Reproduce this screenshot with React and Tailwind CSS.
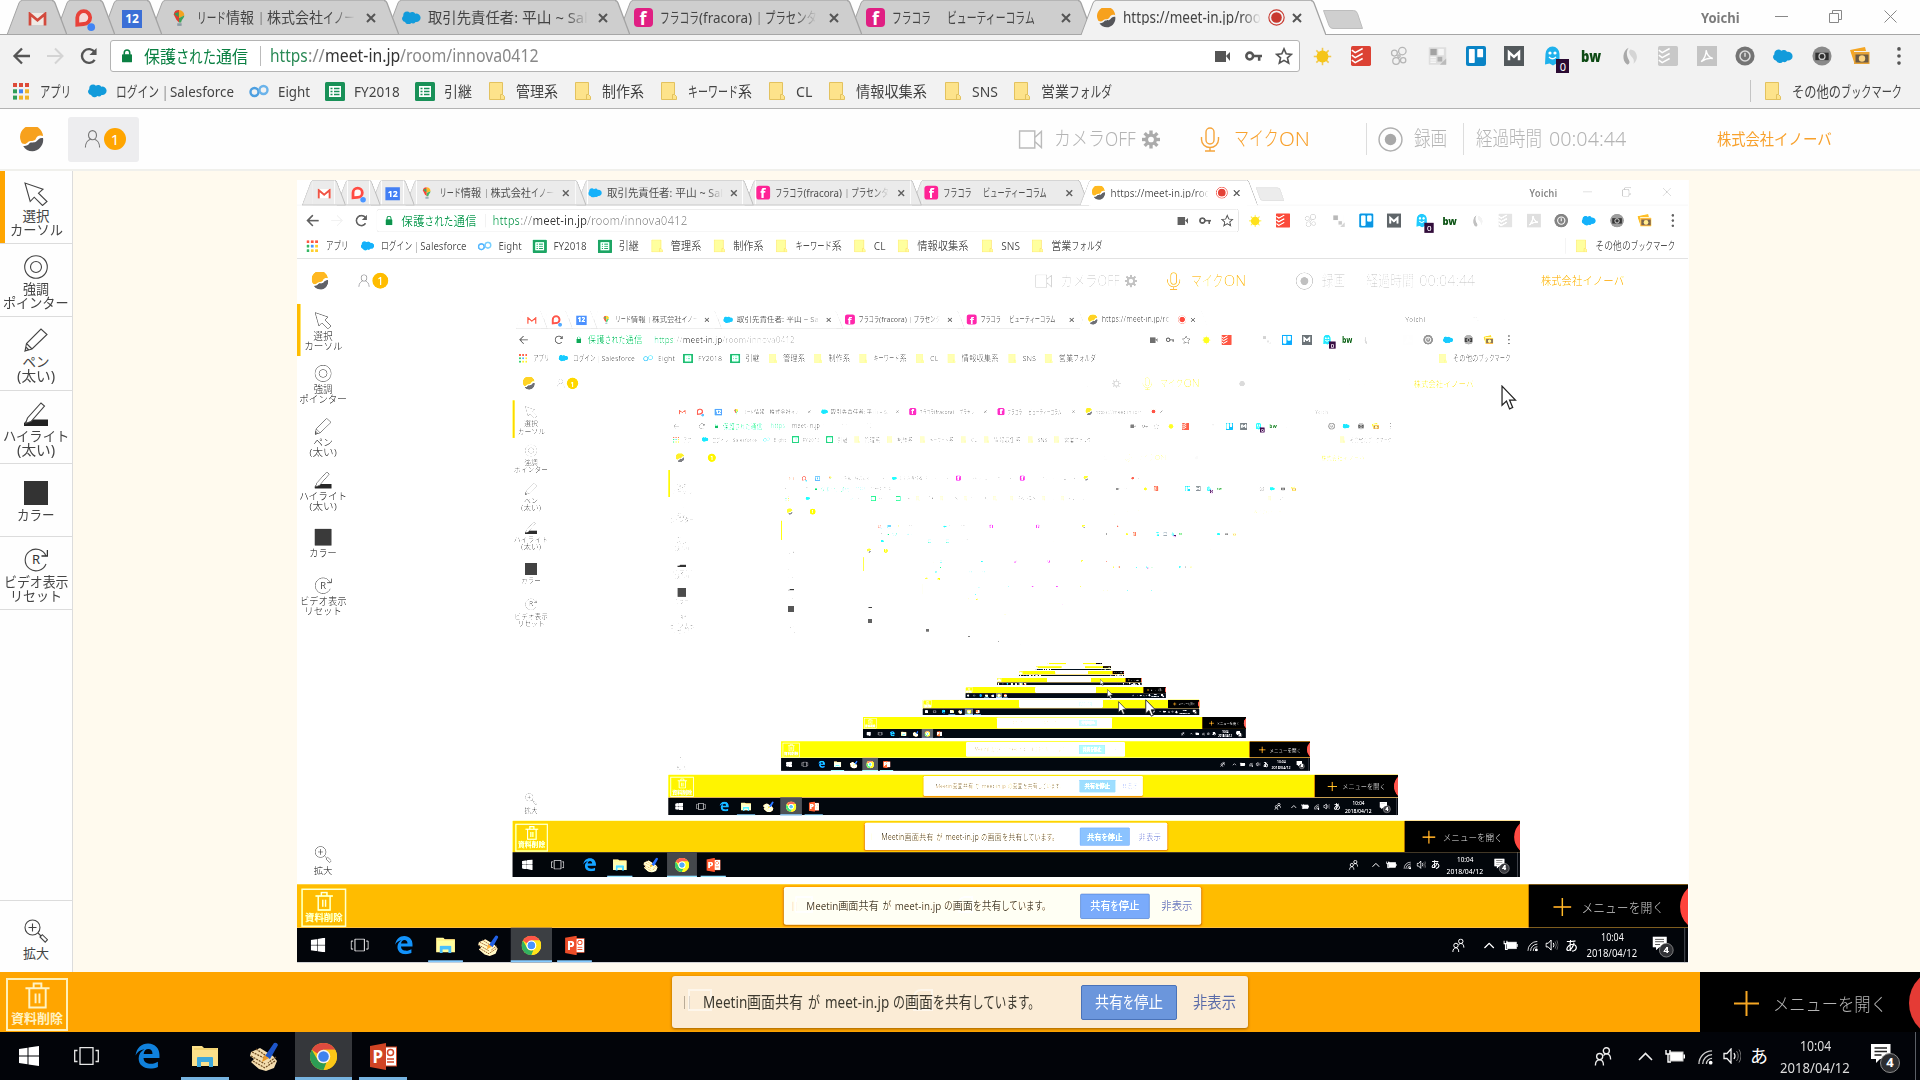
import React, { useLayoutEffect, useRef, useState } from "react";

/* Text squeezed or stretched horizontally to an exact width. */
function Fit({ w, children, className = "" }) {
  const ref = useRef(null);
  const [k, setK] = useState(1);
  useLayoutEffect(() => {
    const n = ref.current ? ref.current.offsetWidth : 0;
    if (n > 0) setK(w / n);
  }, [w]);
  return (
    <span className={"inline-block shrink-0 whitespace-nowrap text-left " + className} style={{ width: w }}>
      <span ref={ref} className="inline-block origin-left whitespace-pre" style={{ transform: `scaleX(${k})` }}>
        {children}
      </span>
    </span>
  );
}

/* A row of fitted runs: [text, width, gap before] */
function Runs({ parts, className = "" }) {
  return (
    <span className={"flex shrink-0 items-center " + className}>
      {parts.map(([t, w, g = 0], i) => (
        <span key={i} className="flex" style={{ marginLeft: g }}>
          <Fit w={w}>{t}</Fit>
        </span>
      ))}
    </span>
  );
}

const Svg = ({ w = 20, h = w, vb = "0 0 24 24", children, className = "" }) => (
  <svg width={w} height={h} viewBox={vb} fill="none" className={"block shrink-0 " + className}>
    {children}
  </svg>
);

/* ---------- favicons and bookmark icons ---------- */
const Gmail = () => (
  <Svg w={19} h={14} vb="0 0 19 14">
    <rect x="1" y="1" width="17" height="12" fill="#efe9e4" />
    <path d="M2 13.500V2l7.500 6.200L17 2v11.500" stroke="#d24a3d" strokeWidth="2.700" />
  </Svg>
);
const Dots = () => (
  <Svg w={23} h={24}>
    <path d="M2.500 19V9.500a8.700 8.700 0 1 1 8.700 8.700z" fill="#e8423a" />
    <path d="M6.500 14.500V9.500a4.700 4.700 0 1 1 4.700 4.700z" fill="#f4dcda" />
    <circle cx="19" cy="19.500" r="4" fill="#4184f3" />
  </Svg>
);
const Cal = () => (
  <div className="flex h-[18px] w-5 shrink-0 items-center justify-center bg-[#3b6fd6] text-[12px] leading-none font-bold text-white">12</div>
);
const Bulb = () => (
  <Svg w={14} h={20} vb="0 0 16 20">
    <path d="M2 6a6 5.500 0 0 1 6-5v14L5 12z" fill="#e03b2f" />
    <path d="M8 1a6 5.500 0 0 1 6 6l-6 3z" fill="#f3a21f" />
    <path d="M14 7c0 3-3 4-3.500 8H8v-5z" fill="#3da35a" />
    <path d="M2.500 5l5 4V3z" fill="#2f9e58" />
    <rect x="6" y="16" width="5" height="3" fill="#8a9aa3" />
  </Svg>
);
const Cloud = ({ w = 20 }) => (
  <Svg w={w} h={w * 0.72} vb="0 0 20 14">
    <path d="M8.300 1.600A4 4 0 0 1 14 2.600 4.600 4.600 0 0 1 19.600 7a4.400 4.400 0 0 1-5.300 4.300 3.600 3.600 0 0 1-4.500 1.200 4 4 0 0 1-6.600-1A3.700 3.700 0 0 1 1.400 5 4 4 0 0 1 8.300 1.600z" fill="#129bdb" />
  </Svg>
);
const Fr = () => (
  <div className="flex h-[19px] w-[19px] shrink-0 items-center justify-center rounded-sm bg-[#e01f83] text-[18px] leading-none font-bold text-white">f</div>
);
const Logo = ({ w = 18, h = w }) => (
  <Svg w={w} h={h}>
    <path d="M1 14A11.500 11.500 0 1 1 23 8.500c-3.500-1.500-6 0-7 2.500s-3 2.300-5.500 2.500C7.500 13.800 7.500 16 5 16.500 2.800 16.500 1.300 15.700 1 14z" fill="#f7a11d" />
    <path d="M3.200 18.500c3 .3 5-.7 6.300-2.700 1.500-1.800 5 .2 7.300-2.300 1.700-2 3-3.500 6.200-3C24.300 17 19 23.700 12.500 23.700 8.500 23.700 5 22 3.200 18.500z" fill="#55565a" />
  </Svg>
);
const Apps = () => (
  <Svg w={16} h={17} vb="0 0 16 17">
    {["#dd4b39", "#dd4b39", "#dd4b39", "#2f9e58", "#4184f3", "#f0b429", "#2f9e58", "#f0b429", "#f0b429"].map((c, i) => (
      <rect key={i} x={(i % 3) * 6} y={Math.floor(i / 3) * 6.300} width="4" height="4" fill={c} />
    ))}
  </Svg>
);
const Eight = () => (
  <Svg w={20} h={14} vb="0 0 20 14">
    <circle cx="5.500" cy="8" r="4" stroke="#4d9fe0" strokeWidth="2.400" />
    <circle cx="14.500" cy="6" r="4" stroke="#6bb3ea" strokeWidth="2.400" />
  </Svg>
);
const Sheet = () => (
  <Svg w={20} h={19} vb="0 0 20 19">
    <rect width="20" height="19" rx="1.500" fill="#199158" />
    <rect x="4" y="4" width="12" height="11" fill="#fff" />
    <path d="M5.500 6.500h2M9 6.500h5.500M5.500 9.500h2M9 9.500h5.500M5.500 12.500h2M9 12.500h5.500" stroke="#199158" strokeWidth="1.400" />
  </Svg>
);
const Folder = () => (
  <Svg w={16} h={18} vb="0 0 16 18">
    <path d="M.5.500h13v12l2 2v3H.5z" fill="#fde38b" stroke="#e3c25f" />
    <path d="M11.500 17v-4.500h2" stroke="#e3c25f" />
  </Svg>
);
const Close = () => (
  <Svg w={10} h={10} vb="0 0 10 10">
    <path d="M1 1l8 8M9 1L1 9" stroke="#555" strokeWidth="2" />
  </Svg>
);

/* ---------- tab strip ---------- */
function Tab({ wc, z, active, children }) {
  const fill = active ? "#f2f2f2" : "#cecece";
  return (
    <div className={"relative flex h-[35px] shrink-0 items-center " + wc + " " + z}>
      <div className="absolute inset-0 flex">
        <svg className="h-full w-[15px]" viewBox="0 0 15 35" preserveAspectRatio="none">
          <path d="M0 35L12 3Q13 .5 15 .5V35z" fill={fill} />
          <path d="M0 35L12 3Q13 .5 15 .5" fill="none" stroke="#a3a3a3" />
        </svg>
        <div className={"h-full flex-1 border-t border-[#b5b5b5] " + (active ? "bg-[#f2f2f2]" : "bg-[#cecece]")} />
        <svg className="h-full w-[15px]" viewBox="0 0 15 35" preserveAspectRatio="none">
          <path d="M15 35L3 3Q2 .5 0 .5V35z" fill={fill} />
          <path d="M15 35L3 3Q2 .5 0 .5" fill="none" stroke="#a3a3a3" strokeWidth="1.300" />
        </svg>
      </div>
      {!active && <div className="absolute inset-x-0 bottom-0 h-px bg-[#a6a6a6]" />}
      <div className="relative flex w-full items-center">{children}</div>
    </div>
  );
}

const FADE = "[mask-image:linear-gradient(to_right,black_86%,transparent_100%)]";

function TabStrip() {
  return (
    <div className="relative flex h-[35px] items-center bg-[#fefefe] pl-[7px] text-[15px] leading-none text-[#444]">
      <div className="absolute inset-x-0 bottom-0 h-px bg-[#a6a6a6]" />
      <Tab wc="w-[60px]" z="z-[9]"><div className="flex w-full justify-center pt-[2px]"><Gmail /></div></Tab>
      <Tab wc="w-[60px] -ml-[12.500px]" z="z-[8]"><div className="flex w-full justify-center pt-[4px]"><Dots /></div></Tab>
      <Tab wc="w-[60px] -ml-[12.500px]" z="z-[7]"><div className="flex w-full justify-center pt-[3px]"><Cal /></div></Tab>
      <Tab wc="w-[249px] -ml-[12.500px]" z="z-[6]">
        <div className="ml-[22px] w-[18px]"><Bulb /></div>
        <Runs className={"ml-[7px] " + FADE} parts={[["リード", 29], ["情報", 28], ["|", 4, 5], ["株式会社", 56, 4], ["イノー", 32]]} />
        <div className="ml-[11px]"><Close /></div>
      </Tab>
      <Tab wc="w-[244px] -ml-[12.500px]" z="z-[5]">
        <div className="ml-[16px]"><Cloud w={19} /></div>
        <Runs className={"ml-[7px] " + FADE} parts={[["取引先責任者:", 90], ["平山 ~ Sal", 66, 4]]} />
        <div className="ml-[10px]"><Close /></div>
      </Tab>
      <Tab wc="w-[244px] -ml-[12.500px]" z="z-[4]">
        <div className="ml-[16px]"><Fr /></div>
        <Runs className={"ml-[7px] " + FADE} parts={[["フラコラ", 39], ["(fracora)", 53], ["|", 4, 5], ["プラセンタ", 52, 4]]} />
        <div className="ml-[12px]"><Close /></div>
      </Tab>
      <Tab wc="w-[244px] -ml-[12.500px]" z="z-[3]">
        <div className="ml-[17px]"><Fr /></div>
        <Runs className="ml-[7px]" parts={[["フラコラ", 39], ["ビューティーコラム", 88, 16]]} />
        <div className="ml-[26px]"><Close /></div>
      </Tab>
      <Tab wc="w-[245px] -ml-[12.500px]" z="z-10" active>
        <div className="ml-[16px]"><Logo w={19} h={20} /></div>
        <Runs className={"ml-[7px] text-[15.500px] " + FADE} parts={[["https://meet-in.jp/roo", 138]]} />
        <Svg w={17} h={17} className="ml-[7px]">
          <circle cx="12" cy="12" r="10.800" stroke="#c8392f" strokeWidth="1.600" />
          <circle cx="12" cy="12" r="7.500" fill="#c8392f" />
        </Svg>
        <div className="ml-[7px]"><Close /></div>
      </Tab>
      <Svg w={42} h={21} vb="0 0 42 21" className="-ml-[4px] mb-[-3px]">
        <path d="M1.500 1.500h30q3 0 4 3l5 15H11q-3 0-4-3z" fill="#cfcfcf" stroke="#bdbdbd" />
      </Svg>
      <div className="ml-auto flex items-center pb-[3px]">
        <Fit w={39} className="pt-1 text-[14px] font-bold text-[#7c7c7c]">Yoichi</Fit>
        <div className="ml-[35px] h-px w-[13px] bg-[#888]" />
        <Svg w={13} h={13} vb="0 0 13 13" className="ml-[41px]">
          <path d="M.5 3.500h9v9h-9zM3.500 3V.5h9v9H10" stroke="#888" />
        </Svg>
        <Svg w={13} h={13} vb="0 0 13 13" className="mr-[23px] ml-[42px]">
          <path d="M.5.500l12 12M12.500.5l-12 12" stroke="#888" />
        </Svg>
      </div>
    </div>
  );
}

/* ---------- toolbar ---------- */
const Sun = () => (
  <Svg w={19}>
    {[0, 45, 90, 135].map((a) => (
      <path key={a} d="M12 1v22" stroke="#f2c94c" strokeWidth="2" transform={`rotate(${a} 12 12)`} />
    ))}
    <circle cx="12" cy="12" r="7.500" fill="#f5c518" />
  </Svg>
);
const Todo = ({ c }) => (
  <Svg w={20}>
    <rect width="24" height="24" rx="2" fill={c} />
    <path d="M1 5l4 3 9-5M1 11l4 3 9-5M1 17l4 3 9-5" stroke="#fff" strokeWidth="1.800" />
  </Svg>
);
const Petals = () => (
  <Svg w={20} h={22}>
    <g stroke="#b5b5b5" strokeWidth="1.500">
      <circle cx="16" cy="6" r="4.500" /><circle cx="6.500" cy="8.500" r="3.500" /><circle cx="8.500" cy="18" r="4" /><circle cx="17" cy="17" r="3.200" /><circle cx="12" cy="12" r="1.500" />
    </g>
  </Svg>
);
const Blocks = () => (
  <Svg w={19} h={20}>
    <rect x="1" y="1" width="22" height="22" fill="#dedede" />
    <rect x="3" y="3" width="8" height="8" fill="#a2a2a2" /><rect x="13" y="3" width="7" height="8" fill="#f6f6f6" />
    <path d="M3 14h7M3 17h7M3 20h7" stroke="#f6f6f6" strokeWidth="1.800" /><rect x="12" y="13" width="6" height="6" fill="#b0b0b0" />
    <path d="M23 15v8h-8z" fill="#bbb" />
  </Svg>
);
const Trello = () => (
  <Svg w={20}><rect width="24" height="24" rx="2.500" fill="#0a84c6" /><rect x="3.500" y="3.500" width="7" height="17" rx="1" fill="#fff" /><rect x="13.500" y="3.500" width="7" height="10" rx="1" fill="#fff" /></Svg>
);
const MBox = () => (
  <Svg w={20}><rect width="24" height="24" fill="#53595c" /><path d="M6 17V7.500l6 5.500 6-5.500V17" stroke="#fff" strokeWidth="3" /></Svg>
);
const Ghost = () => (
  <div className="relative">
    <Svg w={17} h={20} vb="0 0 17 20">
      <path d="M1.500 8a7 7.500 0 0 1 14 0v8l1 3-4-1.500-3.500 2-3.500-2L1 18.500z" fill="#1fb1ec" />
      <circle cx="6" cy="7" r="1.600" fill="#fff" /><circle cx="11" cy="7" r="1.600" fill="#fff" />
      <path d="M5 11q3.500 3.500 7 0" stroke="#fff" strokeWidth="1.300" />
    </Svg>
    <div className="absolute top-[13px] left-[12px] flex h-[14px] w-[13px] items-center justify-center bg-[#2b0b33] text-[11px] leading-none text-white">0</div>
  </div>
);
const Bw = () => <Fit w={20} className="text-[15px] leading-none font-black text-[#0d4a14]">bw</Fit>;
const Swirl = () => (
  <Svg w={19}><path d="M11 1C3 4 2 18 9 22c3 0 4-3 2-6S7 6 11 1z" fill="#a9a9a9" /><path d="M13 3c8 0 12 12 4 18 2-6-2-8-4-11s-2-5 0-7z" fill="#d5d5d5" /></Svg>
);
const Pdf = () => (
  <Svg w={20}><rect width="24" height="24" fill="#c4c4c4" /><path d="M5 19c3-3 6-8 6-14 1 6 4 9 8 10-5-1-10 1-14 4z" stroke="#fff" strokeWidth="1.600" /></Svg>
);
const Power = () => (
  <Svg w={20}><circle cx="12" cy="12" r="11.500" fill="#747474" /><circle cx="12" cy="12" r="6" stroke="#ddd" strokeWidth="1.800" /><path d="M12 8v5" stroke="#ddd" strokeWidth="1.800" /></Svg>
);
const Cam = () => (
  <Svg w={20}><circle cx="12" cy="12" r="11.500" fill="#8a8a8a" /><rect x="4" y="8" width="16" height="9" fill="#303030" /><circle cx="12" cy="12.500" r="3.600" fill="#303030" stroke="#c9c9c9" strokeWidth="1.500" /></Svg>
);
const Photos = () => (
  <Svg w={20} h={18} vb="0 0 20 18"><path d="M0 3L15 0l1 4H4v11z" fill="#f5a623" /><rect x="4" y="5" width="15.500" height="12" fill="#e8a336" /><rect x="5.500" y="7.500" width="13" height="8" fill="#6b5a45" /><circle cx="12" cy="11.500" r="3.200" fill="#fbd27f" /></Svg>
);
const Kebab = () => (
  <Svg w={20}><circle cx="12" cy="3.500" r="2.200" fill="#555" /><circle cx="12" cy="12" r="2.200" fill="#555" /><circle cx="12" cy="20.500" r="2.200" fill="#555" /></Svg>
);

function Toolbar() {
  const ext = [<Sun />, <Todo c="#dc4234" />, <Petals />, <Blocks />, <Trello />, <MBox />, <Ghost />, <Bw />, <Swirl />, <Todo c="#c8c8c8" />, <Pdf />, <Power />, <Cloud w={20} />, <Cam />, <Photos />, <Kebab />];
  return (
    <div className="flex h-[38px] items-start bg-[#f2f2f2] pt-[5px]">
      <div className="flex h-8 w-[110px] items-center pl-[12px]">
        <Svg w={19} h={18} vb="0 0 19 18"><path d="M18 9H3M10 1.500L2.500 9l7.500 7.500" stroke="#555" strokeWidth="2.300" /></Svg>
        <Svg w={19} h={18} vb="0 0 19 18" className="ml-[15px]"><path d="M1 9h15M9 1.500L16.500 9 9 16.500" stroke="#d4d4d4" strokeWidth="2" /></Svg>
        <Svg w={19} h={18} vb="0 0 20 19" className="ml-[14px]"><path d="M16.500 13.500a7.300 7.300 0 1 1 0-8" stroke="#555" strokeWidth="2.500" /><path d="M18.500 1v7.500H11z" fill="#555" /></Svg>
      </div>
      <div className="flex h-8 w-[1190px] items-center rounded-[3px] border border-[#b4b4b4] bg-white text-[17px] leading-none">
        <Svg w={10} h={14} vb="0 0 11 15" className="ml-[11px]"><rect y="5.500" width="11" height="9" rx="1" fill="#0b8043" /><path d="M2.500 6V4a3 3 0 0 1 6 0v2" stroke="#0b8043" strokeWidth="1.700" /></Svg>
        <Runs className="ml-[12px] text-[#0b8043]" parts={[["保護", 32], ["された", 40], ["通信", 32]]} />
        <div className="ml-[12px] h-5 w-px bg-[#bbb]" />
        <Runs className="ml-[9px] text-[17.500px]" parts={[[<span className="text-[#2a8a56]">https</span>, 38], [<span className="text-[#888]">://</span>, 17], [<span className="text-[#333]">meet-in.jp</span>, 75], [<span className="text-[#888]">/room/innova0412</span>, 139]]} />
        <Svg w={15} h={13} vb="0 0 15 13" className="ml-auto"><path d="M0 1h11v11H0zM11 6l4-4v9z" fill="#555" /></Svg>
        <Svg w={17} h={12} vb="0 0 18 12" className="ml-[15px]"><circle cx="5" cy="6" r="3.600" stroke="#555" strokeWidth="2.700" /><path d="M8.500 6H18M15 6v5" stroke="#555" strokeWidth="2.700" /></Svg>
        <Svg w={18} className="mr-[6px] ml-[13px]"><path d="M12 2.500l2.900 6.600 7 .7-5.300 4.700 1.600 7L12 17.800l-6.200 3.700 1.600-7L2.100 9.800l7-.7z" stroke="#555" strokeWidth="2.200" /></Svg>
      </div>
      <div className="flex h-8 items-center pl-[3px]">
        {ext.map((e, i) => (
          <div key={i} className="flex w-[38.450px] justify-center">{e}</div>
        ))}
      </div>
    </div>
  );
}

function Bookmarks() {
  const items = [
    [<Apps />, 76, [["アプリ", 31]]],
    [<Cloud w={19} />, 162, [["ログイン", 43], ["|", 4, 4], ["Salesforce", 64, 3]]],
    [<Eight />, 76, [["Eight", 32]]],
    [<Sheet />, 90, [["FY2018", 46]]],
    [<Sheet />, 72, [["引継", 28]]],
    [<Folder />, 86, [["管理系", 42]]],
    [<Folder />, 86, [["制作系", 42]]],
    [<Folder />, 108, [["キーワード", 50], ["系", 14]]],
    [<Folder />, 60, [["CL", 16]]],
    [<Folder />, 116, [["情報収集系", 71]]],
    [<Folder />, 69, [["SNS", 26]]],
    [<Folder />, 110, [["営業", 28], ["フォルダ", 43]]],
  ];
  return (
    <div className="flex h-[36px] items-center border-b border-[#b3b3b3] bg-[#f2f2f2] pt-px pl-[11px] text-[15px] leading-none text-[#444]">
      {items.map(([ic, w, parts], i) => (
        <div key={i} className="flex shrink-0 items-center" style={{ width: w }}>
          <div className="mr-[9px] flex w-5 shrink-0 justify-center">{ic}</div>
          <Runs parts={parts} />
        </div>
      ))}
      <div className="ml-auto flex items-center pr-[18px]">
        <div className="mr-[14px] h-[22px] w-px bg-[#c4c4c4]" />
        <Folder />
        <Runs className="ml-[11px]" parts={[["その他の", 49], ["ブックマーク", 61]]} />
      </div>
    </div>
  );
}

/* ---------- meeting page ---------- */
function Header() {
  return (
    <div className="flex h-[62px] items-center border-b-2 border-[#f0f0ec] bg-[#fefefe] text-[20px] leading-none font-light text-[#b4b4b4]">
      <div className="ml-[20px]"><Logo w={24} h={25} /></div>
      <div className="ml-[24px] flex h-[45px] w-[71px] items-center rounded-[3px] bg-[#ededef] pl-[16px]">
        <Svg w={17} h={18} vb="0 0 17 19"><ellipse cx="8.500" cy="5.500" rx="4.200" ry="4.800" stroke="#777" strokeWidth="1.200" /><path d="M1 18.500c0-5 3-8 5.500-8.700M16 18.500c0-5-3-8-5.500-8.700" stroke="#777" strokeWidth="1.200" /></Svg>
        <div className="ml-[3px] flex h-[22px] w-[22px] items-center justify-center rounded-full bg-[#ffa500] text-[15px] font-normal text-white">1</div>
      </div>
      <Svg w={25} h={19} vb="0 0 25 20" className="ml-[879px]"><path d="M1 1h16v18H1zM17 8l7-6.500v17L17 12" stroke="#bbb" strokeWidth="1.500" /></Svg>
      <Runs className="ml-[11px]" parts={[["カメラ", 51], ["OFF", 31]]} />
      <Svg w={18} h={19} className="ml-[6px]">
        {[0, 45, 90, 135].map((a) => (
          <path key={a} d="M12 0v24" stroke="#ababab" strokeWidth="4.500" transform={`rotate(${a} 12 12)`} />
        ))}
        <circle cx="12" cy="12" r="8" fill="#ababab" /><circle cx="12" cy="12" r="3.800" fill="#fefefe" />
      </Svg>
      <Svg w={20} h={25} vb="0 0 20 25" className="ml-[40px]"><rect x="6" y="1" width="8" height="16" rx="4" stroke="#f5a53c" strokeWidth="1.400" /><path d="M1.500 10v2.500a8.500 8 0 0 0 17 0V10M10 20.500V24M5 24h10" stroke="#f5a53c" strokeWidth="1.400" /></Svg>
      <Runs className="ml-[14px] text-[#f8a12c]" parts={[["マイク", 45], ["ON", 31]]} />
      <div className="ml-[56px] h-[32px] w-px bg-[#ddd]" />
      <Svg w={25} h={25} className="ml-[11px]"><circle cx="12" cy="12" r="11" stroke="#b0b0b0" strokeWidth="1.400" /><circle cx="12" cy="12" r="5.500" fill="#a8a8a8" /></Svg>
      <Runs className="ml-[11px]" parts={[["録画", 33]]} />
      <div className="ml-[16px] h-[32px] w-px bg-[#ddd]" />
      <Runs className="ml-[12px]" parts={[["経過時間", 66], ["00:04:44", 77, 7]]} />
      <Runs className="ml-[91px] pt-[2px] text-[15.500px] font-normal text-[#f8a12c]" parts={[["株式会社", 57], ["イノーバ", 58]]} />
    </div>
  );
}

const toolIcons = {
  arrow: <path d="M1 1l5.200 18.500 4-4.300 8.300 8.300 4.500-4-8.500-8.300 4.500-4z" stroke="#444" strokeWidth="1.100" />,
  target: <g stroke="#444" strokeWidth="1.100"><circle cx="12" cy="12" r="11.300" /><circle cx="12" cy="12" r="5.500" /></g>,
  pen: <path d="M1 23l1.500-7.500L17 1l6 5.500L8 21zM2.500 15.500L8 21M1 23l1-4 2.500 2.600z" stroke="#444" strokeWidth="1.100" />,
  marker: <g><path d="M4 17.500h20V24H0v-3z" fill="#222" /><path d="M1.500 21.500l2-5.500L17 1l3.500 3L7 19.500z" fill="#fff" stroke="#444" strokeWidth="1.100" /></g>,
  square: <rect width="24" height="24" fill="#333" />,
};

function Tool({ icon, lines, on }) {
  return (
    <div className={"relative flex h-[73.200px] flex-col items-center border-b border-[#dcdcdc] " + (lines.length === 1 ? "pt-[17px]" : "pt-[11px]")}>
      {on && <div className="absolute top-0 left-0 h-[72px] w-[5px] bg-[#ffa500]" />}
      {icon === "reset" ? (
        <div className="relative flex h-6 w-6 items-center justify-center text-[13px] leading-none text-[#333]">
          <Svg w={24} className="absolute inset-0"><path d="M22 16A10.800 10.800 0 1 1 22 8" stroke="#444" strokeWidth="1.100" /><path d="M23.500 2v6h-6" stroke="#333" strokeWidth="1.500" /></Svg>
          R
        </div>
      ) : (
        <Svg w={24}>{toolIcons[icon]}</Svg>
      )}
      <div className="mt-[3px] flex flex-col items-center text-[13.500px] leading-[14px] text-[#444]">
        {lines.map(([t, w]) => (
          <Fit key={t} w={w} className="h-[14px]">{t}</Fit>
        ))}
      </div>
    </div>
  );
}

function Sidebar() {
  return (
    <div className="flex w-[73px] shrink-0 flex-col border-r border-[#dcdcdc] bg-[#fefefe]">
      <Tool on icon="arrow" lines={[["選択", 27], ["カーソル", 53]]} />
      <Tool icon="target" lines={[["強調", 26], ["ポインター", 66]]} />
      <Tool icon="pen" lines={[["ペン", 27], ["(太い)", 38]]} />
      <Tool icon="marker" lines={[["ハイライト", 66], ["(太い)", 38]]} />
      <Tool icon="square" lines={[["カラー", 38]]} />
      <Tool icon="reset" lines={[["ビデオ表示", 65], ["リセット", 52]]} />
      <div className="mt-auto flex h-[72px] flex-col items-center border-t border-[#dcdcdc] pt-[18px]">
        <Svg w={24}><circle cx="8.500" cy="8.500" r="7.500" stroke="#444" strokeWidth="1.100" /><path d="M4.500 8.500h8M8.500 4.500v8M14 14l3 3" stroke="#444" strokeWidth="1.100" /><path d="M16 18l2.300-2.300 5.200 5-2.300 2.500z" stroke="#444" strokeWidth="1.100" /></Svg>
        <Fit w={26} className="mt-[3px] text-[13px] leading-[14px] text-[#444]">拡大</Fit>
      </div>
    </div>
  );
}

function ShareToast() {
  return (
    <div className="absolute top-[4px] left-[672px] flex h-[52px] w-[576px] items-center rounded-[3px] bg-[#fbecd6] text-[16px] leading-none text-[#3d3a30] shadow-[0_1px_3px_rgba(90,50,0,0.6)]">
      <div className="absolute top-[13px] left-[16px] h-[22px] w-[24px] border-2 border-white/50" />
      <div className="absolute top-[13px] left-[241px] h-[22px] w-[20px] rounded-tl-lg border-2 border-white/50" />
      <div className="ml-[12px] flex h-[13px] w-[6px] justify-between border-x border-[#b9ab97]" />
      <Runs className="relative ml-[13px]" parts={[["Meetin", 44], ["画面共有", 56], ["が", 12, 5], ["meet-in.jp", 64, 5], ["の", 12, 4], ["画面", 28], ["を", 12], ["共有", 27], ["しています。", 68]]} />
      <div className="ml-[41px] flex h-[35px] w-[96px] items-center justify-center rounded-[2px] border border-[#4a73b8] bg-[#6b96dc] text-white">
        <Runs parts={[["共有", 28], ["を", 11], ["停止", 29]]} />
      </div>
      <Runs className="ml-[16px] text-[#5a6ba8]" parts={[["非表示", 43]]} />
    </div>
  );
}

function MenuBar() {
  return (
    <div className="relative flex h-[60px] overflow-hidden bg-[#ffa500]">
      <div className="mt-[6px] ml-[6px] flex h-[53px] w-[62px] flex-col items-center border-2 border-[#fff0b8] pt-[2px]">
        <Svg w={27} h={27} vb="0 0 27 28"><path d="M1 6.500h25M9.500 6V1.500h8V6M5 7v19.500h17V7M11.500 12v10M15.500 12v10" stroke="#fff3c4" strokeWidth="2" /></Svg>
        <Fit w={52} className="mt-px text-[13px] leading-[16px] font-bold text-[#fff3c4]">資料削除</Fit>
      </div>
      <ShareToast />
      <div className="relative ml-auto flex w-[220px] items-center overflow-hidden bg-black pt-[3px] text-[18px] leading-none font-light text-[#b4b4b4]">
        <Svg w={25} vb="0 0 25 25" className="ml-[34px]"><path d="M12.500 0v25M0 12.500h25" stroke="#f5a623" strokeWidth="2" /></Svg>
        <Runs className="ml-[14px]" parts={[["メニュー", 65], ["を開く", 49]]} />
        <div className="absolute top-[-4px] left-[209px] h-[70px] w-[70px] rounded-full bg-[#e53b35]" />
      </div>
    </div>
  );
}

/* ---------- taskbar ---------- */
const Win = () => (
  <Svg w={20} vb="0 0 20 20"><path d="M0 3l8.500-1.200V9.500H0zM9.500 1.600L20 0v9.500H9.500zM0 10.500h8.500v7.700L0 17zM9.500 10.500H20V20L9.500 18.400z" fill="#fff" /></Svg>
);
const TaskView = () => (
  <Svg w={25} h={18} vb="0 0 25 18"><path d="M6 .7h13v16.600H6zM3.500 3.500H.7v11h2.800M21.500 3.500h2.800v11h-2.800" stroke="#e6e6e6" strokeWidth="1.300" /></Svg>
);
const Edge = () => (
  <Svg w={25} h={26}><path d="M.5 11.500C1.500 4 6.500 0 12.500 0 19.500 0 23.500 5 23.500 11v3H8.200c.2 4 3.300 5.500 7 5.500 2.500 0 4.800-.8 6.800-2v5c-2.300 1-4.800 1.500-7.500 1.500C7.500 24 3.500 20 3.500 14.500c0-4 2-7.200 5.500-9C5 6 2 8.200.5 11.500zM8.300 10h8.500c0-3-1.500-4.700-4-4.700C10.300 5.300 8.700 7.200 8.300 10z" fill="#1081dc" /></Svg>
);
const Explorer = () => (
  <Svg w={27} h={23} vb="0 0 27 23"><path d="M0 1h10l2 2h14v18H0z" fill="#fbe08a" /><path d="M2 4h23" stroke="#e9c65a" /><path d="M5 22v-9q0-1 1-1h14q1 0 1 1v9h-4v-5H9v5z" fill="#3fa9dc" /></Svg>
);
const Pad = () => (
  <Svg w={28} h={29} vb="0 0 28 29">
    <path d="M1 10l9-4 13 8 4 5-3 7-8 3-7-2L1 20l3-3-4-3z" fill="#f3dcae" />
    <path d="M2 10l14 7M1 14l14 8M6 7l12 8M3 19l12 7M25 19l-9 6M26 15l-8 6" stroke="#6e4c22" strokeWidth="1.300" strokeDasharray="2 1" />
    <path d="M15 14L24 1q3-1 4 2l-8 14z" fill="#1d55c9" /><path d="M12 20l2-7 5 3z" fill="#e79a2d" />
  </Svg>
);
const ChromeIc = () => (
  <Svg w={27} h={27}>
    <circle cx="12" cy="12" r="12" fill="#fbc717" />
    <path d="M1.600 6A12 12 0 0 1 22.400 6H12L6.800 9.500z" fill="#de4b3f" />
    <path d="M22.400 6H12a6 6 0 0 1 5.200 9L12 24A12 12 0 0 0 22.400 6z" fill="#fbc717" />
    <path d="M1.600 6l5.200 9A6 6 0 0 0 14.500 17.500L12 24A12 12 0 0 1 1.600 6z" fill="#2d9c55" />
    <circle cx="12" cy="12" r="6" fill="#f4f4f4" /><circle cx="12" cy="12" r="4.700" fill="#3f82ee" />
  </Svg>
);
const Ppt = () => (
  <div className="relative">
    <Svg w={27} h={27} vb="0 0 27 27"><rect x="14" y="4" width="12.500" height="19" fill="#fff" stroke="#d24726" /><path d="M17 16h7M17 19h7" stroke="#d24726" strokeWidth="1.500" /><circle cx="20.500" cy="9.500" r="3" stroke="#d24726" strokeWidth="1.500" /><path d="M0 3l16-3v27L0 24z" fill="#d04424" /></Svg>
    <span className="absolute top-[5px] left-[3px] text-[17px] leading-none font-bold text-white">P</span>
  </div>
);

function Taskbar() {
  const apps = [
    ["w-[58px]", <Win />], ["w-[56px]", <TaskView />], ["w-[67px]", <Edge />], ["w-[48px]", <Explorer />, 1], ["w-[66px] pl-[4px]", <Pad />], ["w-[57px] bg-[#35373b]", <ChromeIc />, 1], ["w-[48px] ml-[7px]", <Ppt />, 1],
  ];
  return (
    <div className="flex h-[48px] bg-[#020409] text-white">
      {apps.map(([c, ic, run], i) => (
        <div key={i} className={"relative flex shrink-0 items-center justify-center " + c}>
          {ic}
          {run && <div className="absolute inset-x-0 bottom-0 h-[3px] bg-[#76b3e0]" />}
        </div>
      ))}
      <div className="ml-auto flex items-center text-[15px] leading-none">
        <Svg w={18} h={19} vb="0 0 18 20"><g stroke="#eee" strokeWidth="1.400"><circle cx="5.500" cy="10" r="3.200" /><circle cx="12.500" cy="4" r="3.200" /><path d="M1 19.500c0-4 2-6 4.500-6s4 2 4 6M9.500 9c1-1.500 2-1.800 3-1.800 3 0 4.500 2 4.500 6" /></g></Svg>
        <Svg w={15} h={9} vb="0 0 15 9" className="ml-[26px]"><path d="M1 8l6.500-6.500L14 8" stroke="#eee" strokeWidth="1.600" /></Svg>
        <Svg w={20} h={14} vb="0 0 20 14" className="ml-[12px]"><rect x="5" y="3" width="13" height="9" fill="#fff" stroke="#ccc" /><rect x="18.500" y="5.500" width="1.500" height="4" fill="#fff" /><path d="M1 1v4h4V1M3 5v8h3" stroke="#fff" strokeWidth="1.400" /></Svg>
        <Svg w={15} h={15} vb="0 0 16 16" className="mt-[3px] ml-[13px]"><path d="M1 15A14 14 0 0 1 15 1M5 15A10 10 0 0 1 15 5M9 15a6 6 0 0 1 6-6" stroke="#ccc" strokeWidth="1.400" /><circle cx="13.500" cy="13.500" r="2" fill="#fff" /></Svg>
        <Svg w={18} h={16} vb="0 0 18 16" className="ml-[10px]"><path d="M1 5.500h3l4-4.500v14l-4-4.500H1z" stroke="#eee" strokeWidth="1.300" /><path d="M11 5q2 3 0 6" stroke="#eee" strokeWidth="1.300" /><path d="M13.500 3q3.500 5 0 10M16 1.500q4 6.500 0 13" stroke="#777" /></Svg>
        <span className="ml-[9px] text-[18px]">あ</span>
        <div className="ml-[12px] flex w-[70px] flex-col items-center gap-[7px] text-[#ddd]">
          <Fit w={31}>10:04</Fit>
          <Fit w={70}>2018/04/12</Fit>
        </div>
        <div className="relative mr-[35px] mb-[5px] ml-[21px]">
          <Svg w={20} h={20} vb="0 0 20 20"><path d="M0 0h19.500v15H9l-4 4v-4H0z" fill="#fff" /><path d="M3.500 4h12.500M3.500 7.500h12.500M3.500 11h7" stroke="#222" strokeWidth="1.300" /></Svg>
          <div className="absolute top-[9px] left-[9px] flex h-[20px] w-[20px] items-center justify-center rounded-full border border-[#8a8a8a] bg-[#2c2d30] text-[13px] font-bold">4</div>
        </div>
        <div className="mr-[4px] -ml-[11px] h-full w-px bg-[#5b5f66]" />
      </div>
    </div>
  );
}

/* The shared desktop contains itself; every pass through the encoder gets brighter and softer. */
function Screen({ depth }) {
  return (
    <div className="flex h-[1080px] w-[1920px] flex-col overflow-hidden bg-[#fefefe]">
      <TabStrip />
      <Toolbar />
      <Bookmarks />
      <Header />
      <div className="flex h-[801px] shrink-0 bg-[#fffaee]">
        <Sidebar />
        {depth > 0 && (
          <div className="mt-[9px] ml-[224px] h-[782.500px] w-[1391.500px] overflow-hidden bg-[#fefefe]">
            <div className="h-[1080px] w-[1920px] origin-top-left scale-[0.7245] blur-[0.35px] brightness-[1.14]">
              <Screen depth={depth - 1} />
            </div>
          </div>
        )}
      </div>
      <MenuBar />
      <Taskbar />
    </div>
  );
}

function Pointer({ x, y, h }) {
  return (
    <svg className="absolute" style={{ left: x, top: y }} width={h * 0.62} height={h} viewBox="0 0 15 24">
      <path d="M1 1v18.500l4.300-4 3 7.500 3-1.300-3-7.200h5.700z" fill="#fff" stroke="#222" strokeWidth="1.200" />
    </svg>
  );
}

export default function App() {
  return (
    <div className="relative h-[1080px] w-[1920px] overflow-hidden font-['Noto_Sans','Noto_Sans_CJK_JP',sans-serif]">
      <Screen depth={11} />
      <Pointer x={1501} y={385} h={25} />
      <Pointer x={1145} y={699} h={18} />
      <Pointer x={1118} y={701} h={14} />
      <Pointer x={1107} y={689} h={10} />
      <Pointer x={1100} y={679} h={7} />
    </div>
  );
}
